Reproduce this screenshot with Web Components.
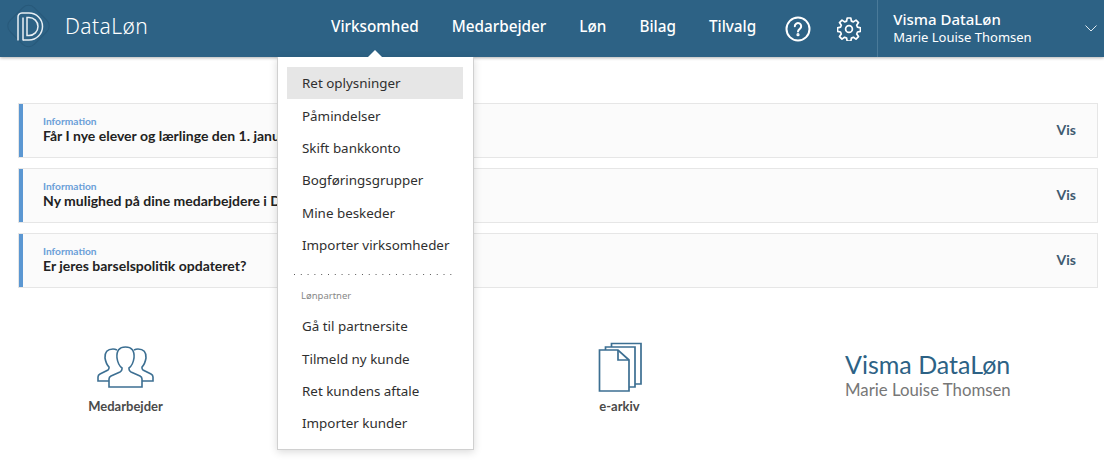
<!DOCTYPE html>
<html lang="da">
<head>
<meta charset="utf-8">
<title>DataLøn</title>
<style>
  html, body { margin: 0; height: 100%; overflow: hidden; background: #fff; }
</style>
</head>
<body>
<dl-page>
  <dl-header slot="header"></dl-header>
  <dl-alert>Får I nye elever og lærlinge den 1. janu</dl-alert>
  <dl-alert>Ny mulighed på dine medarbejdere i D</dl-alert>
  <dl-alert>Er jeres barselspolitik opdateret?</dl-alert>
  <dl-tiles slot="tiles"></dl-tiles>
  <dl-menu slot="menu">
    <dl-menu-item active>Ret oplysninger</dl-menu-item>
    <dl-menu-item>Påmindelser</dl-menu-item>
    <dl-menu-item>Skift bankkonto</dl-menu-item>
    <dl-menu-item>Bogføringsgrupper</dl-menu-item>
    <dl-menu-item>Mine beskeder</dl-menu-item>
    <dl-menu-item>Importer virksomheder</dl-menu-item>
    <div slot="partner-label">Lønpartner</div>
    <dl-menu-item slot="partner">Gå til partnersite</dl-menu-item>
    <dl-menu-item slot="partner">Tilmeld ny kunde</dl-menu-item>
    <dl-menu-item slot="partner">Ret kundens aftale</dl-menu-item>
    <dl-menu-item slot="partner">Importer kunder</dl-menu-item>
  </dl-menu>
</dl-page>

<script>
const UI_FONT = `"Noto Sans", "Open Sans", sans-serif`;
const BODY_FONT = `Lato, "Liberation Sans", sans-serif`;

function define(name, html) {
  customElements.define(name, class extends HTMLElement {
    constructor() {
      super();
      this.attachShadow({ mode: "open" }).innerHTML = html;
    }
  });
}

define("dl-page", `
  <style>
    :host { display: block; position: relative; width: 1104px; height: 462px; overflow: hidden; }
    #alerts { display: flex; flex-direction: column; gap: 10px; padding: 46px 6px 0 18px; }
    ::slotted(dl-menu) { position: absolute; left: 277px; top: 57px; }
  </style>
  <slot name="header"></slot>
  <div id="alerts"><slot></slot></div>
  <slot name="tiles"></slot>
  <slot name="menu"></slot>
`);

define("dl-header", `
  <style>
    :host {
      display: flex; align-items: stretch; height: 57px; color: #fff;
      background: #2d6285; box-shadow: 0 1px 3px rgba(0,0,0,.3);
      font-family: ${UI_FONT}; position: relative;
    }
    #brand { display: flex; align-items: center; width: 331px; flex: none; }
    #brand svg { margin-left: 4px; flex: none; }
    #brand span { font-size: 21px; font-weight: 300; margin-left: 9px; letter-spacing: .4px; padding-bottom: 6px; }
    nav { display: flex; align-items: center; gap: 33px; font-size: 15.3px; font-weight: 500; padding-bottom: 6px; }
    #icons { display: flex; align-items: center; gap: 26px; margin-left: 29px; }
    #user {
      display: flex; align-items: center; justify-content: space-between;
      margin-left: 16px; padding: 0 7px 0 15px; flex: 1; border-left: 1px solid #4a7a99;
    }
    #who { padding-bottom: 2px; }
    #who b { display: block; font-size: 15px; font-weight: 500; line-height: 18px; }
    #who span { display: block; font-size: 13px; line-height: 18px; }
  </style>
  <div id="brand">
    <svg width="52" height="52" viewBox="0 0 52 52" fill="none">
      <rect x="7.500" y="6" width="34" height="34" rx="8" transform="rotate(45 24.500 23)" stroke="#28597a" stroke-width="1"/>
      <g stroke="#e8eff4" stroke-width="1.500">
        <path d="M14 37.500V14.500a4 4 0 0 1 4-4.500h7a13.500 13.500 0 0 1 0 27h-6"/>
        <path d="M19 14.500V37.500"/>
        <path d="M23 14.500h2a9 9 0 0 1 0 18h-2z"/>
      </g>
    </svg>
    <span>DataLøn</span>
  </div>
  <nav><span>Virksomhed</span><span>Medarbejder</span><span>Løn</span><span>Bilag</span><span>Tilvalg</span></nav>
  <div id="icons">
    <svg width="26" height="26" viewBox="0 0 26 26" fill="none" stroke="#fff" stroke-width="2">
      <circle cx="13" cy="13" r="11.500"/>
      <path d="M9.800 10.300a3.200 3.200 0 1 1 5 2.600c-1.200.8-1.800 1.400-1.800 2.700" stroke-linecap="round"/>
      <circle cx="13" cy="18.700" r=".6" fill="#fff"/>
    </svg>
    <svg width="24" height="24" viewBox="0 0 24 24" fill="none" stroke="#fff" stroke-width="1.700" stroke-linejoin="round">
      <circle cx="12" cy="12" r="3.400"/>
      <path d="M10.200 1h3.600l.6 3.100 2 .8 2.600-1.800 2.500 2.500-1.800 2.600.8 2 3 .6v3.600l-3 .6-.8 2 1.800 2.600-2.500 2.500-2.600-1.800-2 .8-.6 3.100h-3.600l-.6-3.100-2-.8-2.600 1.800-2.500-2.500 1.800-2.600-.8-2-3-.6v-3.600l3-.6.8-2-1.800-2.600 2.500-2.500 2.600 1.800 2-.8z"/>
    </svg>
  </div>
  <div id="user">
    <div id="who"><b>Visma DataLøn</b><span>Marie Louise Thomsen</span></div>
    <svg width="12" height="7" viewBox="0 0 12 7" fill="none" stroke="#dfe8ee" stroke-width="1"><path d="M.5.500 6 6l5.500-5.500"/></svg>
  </div>
`);

define("dl-alert", `
  <style>
    :host {
      display: flex; align-items: center; justify-content: space-between; box-sizing: border-box; height: 55px;
      background: #fbfbfb; border: 1px solid #e6e6e6; box-shadow: inset 4px 0 #5b97d2;
      font-family: ${BODY_FONT}; padding: 0 21px 0 24px; color: #222;
    }
    small { display: block; font-size: 10.200px; font-weight: 700; line-height: 12px; color: #6a9fd8; }
    #title { display: block; font-size: 14px; font-weight: 700; line-height: 18px; }
    #vis { font-size: 14px; font-weight: 700; color: #3f5a70; padding-bottom: 3px; }
    #text { padding-bottom: 2px; white-space: nowrap; }
  </style>
  <div id="text"><small>Information</small><span id="title"><slot></slot></span></div>
  <span id="vis">Vis</span>
`);

define("dl-tiles", `
  <style>
    :host {
      display: grid; grid-template-columns: repeat(3, 247px) 1fr; margin: 54px 0 0 2px;
      font-family: ${BODY_FONT};
    }
    .tile { display: flex; flex-direction: column; align-items: center; gap: 6px; font-size: 13px; font-weight: 700; line-height: 16px; color: #4a4a4a; }
    .tile svg { height: 50px; display: block; }
    #who { padding: 9px 0 0 102px; color: #2d6285; font-size: 25px; line-height: 26px; }
    #who span { display: block; font-size: 16.800px; line-height: 26px; color: #777; }
  </style>
  <div class="tile">
    <svg width="57" viewBox="0 0 57 50" fill="none" stroke="#3c6f92" stroke-width="1.600">
      <g transform="translate(0 4)">
        <path d="M12 35H1V31q0-2 2-3l8-4q1-1 1-2v-1q-3-3-4-9q-.5-9 8-9q2 0 4 1"/>
        <path d="M45 35H56V31q0-2-2-3l-8-4q-1-1-1-2v-1q3-3 4-9q.5-9-8-9q-2 0-4 1"/>
        <path d="M12 41V33q0-2 2-3l9-4q2-1 2-3v-1q-4-3-5-10q-1-11 8.500-11t8.500 11q-1 7-5 10v1q0 2 2 3l9 4q2 1 2 3v8z"/>
      </g>
    </svg>
    <span>Medarbejder</span>
  </div>
  <div></div>
  <div class="tile">
    <svg width="44" viewBox="0 0 44 50" fill="none" stroke="#3c6f92" stroke-width="1.700">
      <path d="M13.500 5V1.500H43V42H37"/>
      <path d="M7.500 8V5H37V45H31"/>
      <path d="M1.500 8H20L31 18V49H1.500Z"/>
      <path d="M20 8V18H31"/>
    </svg>
    <span>e-arkiv</span>
  </div>
  <div id="who">Visma DataLøn<span>Marie Louise Thomsen</span></div>
`);

define("dl-menu", `
  <style>
    :host {
      display: block; box-sizing: border-box; width: 197px; height: 393px; padding: 10px 10px 10px 9px; background: #fff;
      border: 1px solid #d0d0d0; border-top: 0; box-shadow: 0 2px 8px rgba(0,0,0,.15);
      font-family: ${UI_FONT}; font-size: 13.400px; color: #2f2f2f;
    }
    #arrow {
      position: absolute; left: 90px; top: -7px; width: 0; height: 0;
      border: 7px solid transparent; border-top: 0; border-bottom-color: #fff;
    }
    hr {
      border: 0; height: 1px; margin: 12.600px 6px 14px 7px;
      background: linear-gradient(to right, #555 1px, transparent 1px) 0 0 / 6.800px 1px repeat-x;
    }
    ::slotted([slot="partner-label"]) { font-size: 9.500px; color: #888; margin: 0 0 7px 14px; line-height: 14px; }
  </style>
  <div id="arrow"></div>
  <slot></slot>
  <hr>
  <slot name="partner-label"></slot>
  <slot name="partner"></slot>
`);

define("dl-menu-item", `
  <style>
    :host { display: flex; align-items: center; height: 32.400px; padding-left: 15px; }
    :host([active]) { background: #e6e6e6; }
  </style>
  <slot></slot>
`);
</script>
</body>
</html>
